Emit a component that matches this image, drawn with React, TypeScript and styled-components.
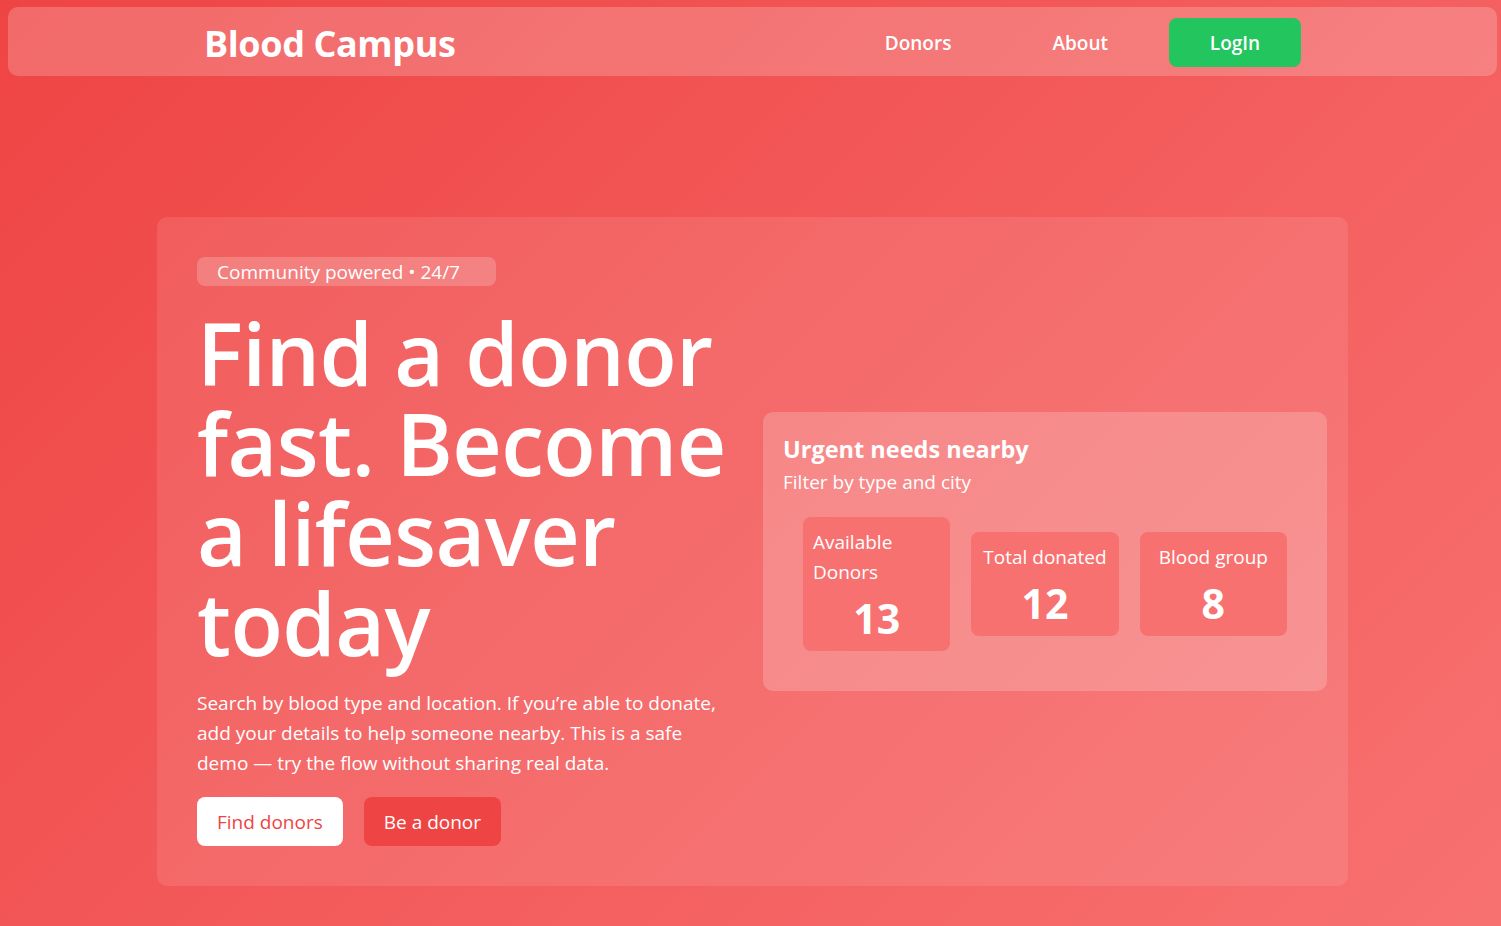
import styled, { createGlobalStyle } from 'styled-components';

const GlobalStyle = createGlobalStyle`
  * {
    box-sizing: border-box;
  }
  html, body {
    margin: 0;
    padding: 0;
  }
  body {
    min-height: 926px;
    font-family: "Segoe UI", "Open Sans", "Noto Sans", sans-serif;
    color: #fff;
    background: linear-gradient(135deg, #ef4444 0%, #f87171 100%);
    background-attachment: fixed;
  }
`;

const Page = styled.div`
  min-height: 926px;
  padding: 7px 4px 0 8px;
`;

const NavBar = styled.nav`
  height: 69px;
  display: flex;
  align-items: center;
  justify-content: space-between;
  padding: 0 196px;
  background-color: rgba(255, 255, 255, 0.2);
  border-radius: 10px;
`;

const Brand = styled.a`
  font-size: 36px;
  font-weight: 700;
  color: #fff;
  text-decoration: none;
  letter-spacing: -0.4px;
  margin-top: 4px;
`;

const NavLinks = styled.div`
  display: flex;
  align-items: center;
`;

const NavLink = styled.a<{ $gap: number }>`
  font-size: 19px;
  font-weight: 600;
  color: #fff;
  text-decoration: none;
  margin: 2px ${(p) => p.$gap}px 0 0;
`;

const LoginButton = styled.button`
  height: 49px;
  width: 132px;
  margin-top: 2px;
  border: none;
  border-radius: 8px;
  background-color: #22c55e;
  color: #fff;
  font-family: inherit;
  font-size: 19px;
  font-weight: 600;
  cursor: pointer;
`;

const Hero = styled.section`
  margin: 141px 149px 0 149px;
  padding: 40px 20px 40px 40px;
  background-color: rgba(255, 255, 255, 0.1);
  border-radius: 10px;
  display: grid;
  grid-template-columns: 546px 564px;
  column-gap: 20px;
  align-items: center;
`;

const HeroText = styled.div`
  display: flex;
  flex-direction: column;
  align-items: flex-start;
`;

const Badge = styled.span`
  width: 299px;
  height: 29px;
  padding: 0 20px;
  display: flex;
  align-items: center;
  font-size: 19px;
  background-color: rgba(255, 255, 255, 0.2);
  border-radius: 8px;
`;

const Headline = styled.h1`
  margin: 22px 0 20px;
  font-size: 86px;
  line-height: 90px;
  font-weight: 600;
  letter-spacing: -0.6px;
`;

const Lead = styled.p`
  max-width: 528px;
  margin: 0 0 19px;
  font-size: 19px;
  line-height: 30px;
`;

const Actions = styled.div`
  display: flex;
  gap: 21px;
`;

const CtaButton = styled.button<{ $variant: 'light' | 'red' }>`
  height: 49px;
  padding: 0 20px;
  border: none;
  border-radius: 8px;
  font-family: inherit;
  font-size: 19px;
  cursor: pointer;
  background-color: ${(p) => (p.$variant === 'light' ? '#fff' : '#ef4444')};
  color: ${(p) => (p.$variant === 'light' ? '#ef4444' : '#fff')};
`;

const NeedsCard = styled.div`
  padding: 20px;
  background-color: rgba(255, 255, 255, 0.2);
  border-radius: 10px;
`;

const NeedsTitle = styled.h3`
  margin: 0;
  font-size: 23.5px;
  line-height: 35px;
  font-weight: 700;
`;

const NeedsSub = styled.p`
  margin: 0;
  font-size: 19px;
  line-height: 30px;
`;

const StatsRow = styled.div`
  margin: 20px;
  display: grid;
  grid-template-columns: repeat(3, 1fr);
  gap: 21px;
  align-items: center;
`;

const StatBox = styled.div`
  padding: 10px;
  display: flex;
  flex-direction: column;
  align-items: center;
  background-color: #f87171;
  border-radius: 8px;
`;

const StatLabel = styled.p`
  margin: 0;
  font-size: 19px;
  line-height: 30px;
`;

const StatValue = styled.h2`
  margin: 0;
  padding-top: 8px;
  font-size: 41px;
  line-height: 46px;
  font-weight: 700;
`;

const stats = [
  { label: 'Available Donors', value: 13 },
  { label: 'Total donated', value: 12 },
  { label: 'Blood group', value: 8 },
];

export default function App() {
  return (
    <Page>
      <GlobalStyle />
      <NavBar>
        <Brand href="#">Blood Campus</Brand>
        <NavLinks>
          <NavLink href="#" $gap={101}>Donors</NavLink>
          <NavLink href="#" $gap={61}>About</NavLink>
          <LoginButton>LogIn</LoginButton>
        </NavLinks>
      </NavBar>

      <Hero>
        <HeroText>
          <Badge>Community powered • 24/7</Badge>
          <Headline>Find a donor fast. Become a lifesaver today</Headline>
          <Lead>
            Search by blood type and location. If you’re able to donate, add your details to help
            someone nearby. This is a safe demo — try the flow without sharing real data.
          </Lead>
          <Actions>
            <CtaButton $variant="light">Find donors</CtaButton>
            <CtaButton $variant="red">Be a donor</CtaButton>
          </Actions>
        </HeroText>

        <NeedsCard>
          <NeedsTitle>Urgent needs nearby</NeedsTitle>
          <NeedsSub>Filter by type and city</NeedsSub>
          <StatsRow>
            {stats.map((s) => (
              <StatBox key={s.label}>
                <StatLabel>{s.label}</StatLabel>
                <StatValue>{s.value}</StatValue>
              </StatBox>
            ))}
          </StatsRow>
        </NeedsCard>
      </Hero>
    </Page>
  );
}
